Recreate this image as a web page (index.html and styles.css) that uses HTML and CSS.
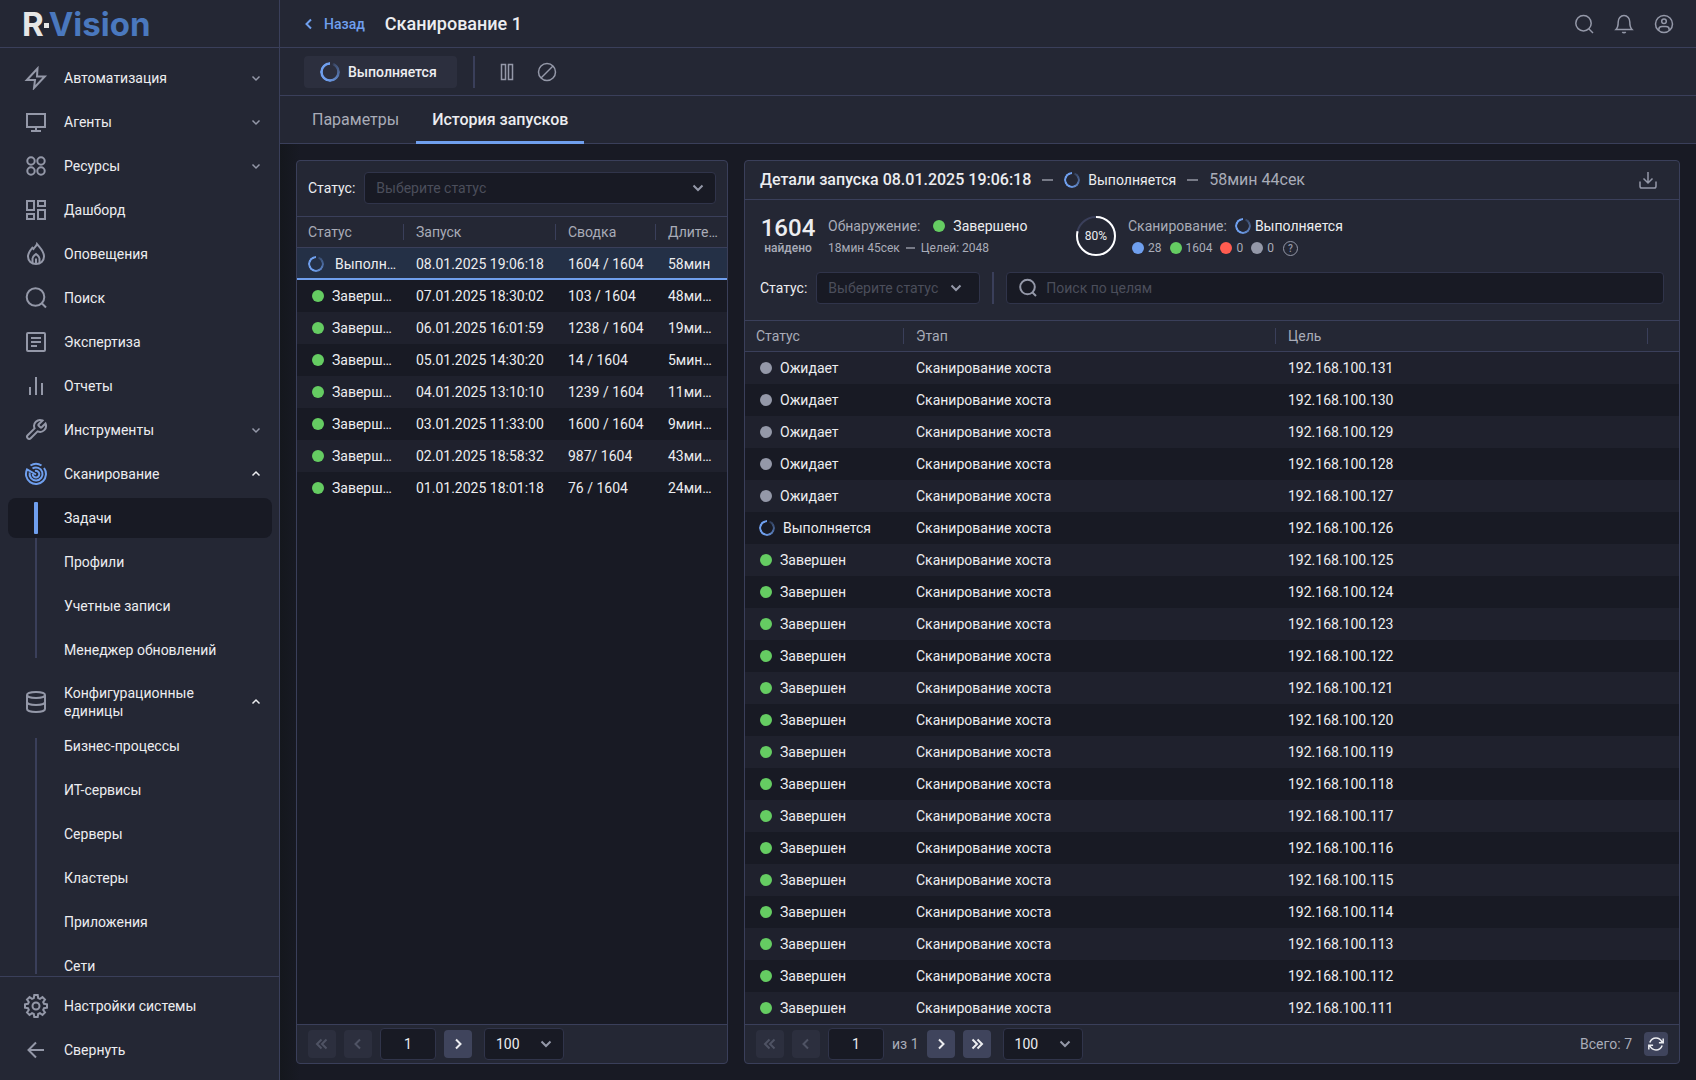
FILE: index.html
```html
<!DOCTYPE html>
<html lang="ru">
<head>
    <meta charset="UTF-8">
    <meta name="viewport" content="width=device-width, initial-scale=1.0">
    <title>R-Vision - Сканирование 1</title>
    <link rel="stylesheet" href="styles.css">
</head>
<body>
    <div class="app">
        <aside class="sidebar">
            <a href="#" class="logo"><span>R</span><i class="logo-dot"></i><span class="logo-blue">Vision</span></a>

            <nav class="nav">
                <a href="#" class="nav-item">
                    <svg class="icon" viewBox="0 0 24 24"><path d="M13.5 2.500 2.800 14H11l-1 8 10.800-11.500H13z"/></svg>
                    <span>Автоматизация</span>
                    <svg class="arrow" viewBox="0 0 16 16"><path d="m4.500 6.500 3.500 3.500 3.500-3.500"/></svg>
                </a>
                <a href="#" class="nav-item">
                    <svg class="icon" viewBox="0 0 24 24"><path d="M3 4h18v13H3zM12 17v4M7 21h10"/></svg>
                    <span>Агенты</span>
                    <svg class="arrow" viewBox="0 0 16 16"><path d="m4.500 6.500 3.500 3.500 3.500-3.500"/></svg>
                </a>
                <a href="#" class="nav-item">
                    <svg class="icon" viewBox="0 0 24 24"><circle cx="7" cy="7" r="3.700"/><circle cx="17" cy="7" r="3.700"/><circle cx="7" cy="17" r="3.700"/><circle cx="17" cy="17" r="3.700"/></svg>
                    <span>Ресурсы</span>
                    <svg class="arrow" viewBox="0 0 16 16"><path d="m4.500 6.500 3.500 3.500 3.500-3.500"/></svg>
                </a>
                <a href="#" class="nav-item">
                    <svg class="icon" viewBox="0 0 24 24"><path d="M3 3h7v9H3zM14 3h7v5h-7zM3 16h7v5H3zM14 12h7v9h-7z"/></svg>
                    <span>Дашборд</span>
                </a>
                <a href="#" class="nav-item">
                    <svg class="icon" viewBox="0 0 24 24"><path d="M13 2c-.5 2-2.500 3.500-3.500 5L8.300 5.800C6 8.500 4 11 4 14.500 4 19 7.500 22 12 22s8-3 8-7.500C20 9 16 6 13 2z"/><path d="M8.500 21v-4.500c0-2 1.500-3 3.500-4.500 2 1.500 3.500 2.500 3.500 4.500V21M12 16.500V21"/></svg>
                    <span>Оповещения</span>
                </a>
                <a href="#" class="nav-item">
                    <svg class="icon" viewBox="0 0 24 24"><circle cx="11.500" cy="11" r="8.800"/><path d="m18 17.500 4 4"/></svg>
                    <span>Поиск</span>
                </a>
                <a href="#" class="nav-item">
                    <svg class="icon" viewBox="0 0 24 24"><rect x="3" y="3" width="18" height="18" rx="1"/><path d="M7 8h10M7 12h10M7 16h6"/></svg>
                    <span>Экспертиза</span>
                </a>
                <a href="#" class="nav-item">
                    <svg class="icon" viewBox="0 0 24 24"><path d="M6 13v8M12 3v18M18 9v12"/></svg>
                    <span>Отчеты</span>
                </a>
                <a href="#" class="nav-item">
                    <svg class="icon" viewBox="0 0 24 24"><path d="M14.700 6.300a1 1 0 0 0 0 1.400l1.600 1.600a1 1 0 0 0 1.400 0l3.800-3.800a6 6 0 0 1-7.900 7.900l-6.900 6.900a2.100 2.100 0 0 1-3-3l6.900-6.900a6 6 0 0 1 7.900-7.900z"/></svg>
                    <span>Инструменты</span>
                    <svg class="arrow" viewBox="0 0 16 16"><path d="m4.500 6.500 3.500 3.500 3.500-3.500"/></svg>
                </a>
                <a href="#" class="nav-item open">
                    <svg class="icon blue" viewBox="0 0 24 24"><path d="M6.500 3.500A10 10 0 0 1 17.500 3.500M20 6A10 10 0 1 1 3 7.500L12 12.500"/><path d="M8.500 6.500a6.500 6.500 0 1 1-2.800 4"/><path d="M11 9a3.300 3.300 0 1 1-2.300 3"/></svg>
                    <span>Сканирование</span>
                    <svg class="arrow" viewBox="0 0 16 16"><path d="m4.500 9.500 3.500-3.500 3.500 3.500"/></svg>
                </a>
                <div class="submenu">
                    <a href="#" class="active">Задачи</a>
                    <a href="#">Профили</a>
                    <a href="#">Учетные записи</a>
                    <a href="#">Менеджер обновлений</a>
                </div>
                <a href="#" class="nav-item open">
                    <svg class="icon" viewBox="0 0 24 24"><ellipse cx="12" cy="5" rx="9" ry="3"/><path d="M3 5v14c0 1.700 4 3 9 3s9-1.300 9-3V5M3 12c0 1.700 4 3 9 3s9-1.300 9-3"/></svg>
                    <span>Конфигурационные единицы</span>
                    <svg class="arrow" viewBox="0 0 16 16"><path d="m4.500 9.500 3.500-3.500 3.500 3.500"/></svg>
                </a>
                <div class="submenu">
                    <a href="#">Бизнес-процессы</a>
                    <a href="#">ИТ-сервисы</a>
                    <a href="#">Серверы</a>
                    <a href="#">Кластеры</a>
                    <a href="#">Приложения</a>
                    <a href="#">Сети</a>
                </div>
            </nav>

            <div class="sidebar-footer">
                <a href="#" class="nav-item">
                    <svg class="icon" viewBox="0 0 24 24"><circle cx="12" cy="12" r="3.500"/><path d="M10.300 1h3.400l.5 3 1.800.8 2.500-1.800 2.500 2.500-1.800 2.500.8 1.800 3 .5v3.400l-3 .5-.8 1.800 1.800 2.500-2.500 2.500-2.500-1.800-1.800.8-.5 3h-3.400l-.5-3-1.800-.8L5.500 21 3 18.500 4.800 16 4 14.200l-3-.5v-3.400l3-.5L4.800 8 3 5.500 5.500 3 8 4.800 9.800 4z"/></svg>
                    <span>Настройки системы</span>
                </a>
                <button type="button" class="nav-item">
                    <svg class="icon" viewBox="0 0 24 24"><path d="M20 12H5M12 4.500 4.500 12l7.500 7.500"/></svg>
                    <span>Свернуть</span>
                </button>
            </div>
        </aside>

        <main class="main">
            <header class="topbar">
                <a href="#" class="back">
                    <svg viewBox="0 0 12 12"><path d="M8 1.500 3.500 6 8 10.500"/></svg>
                    Назад
                </a>
                <h1>Сканирование 1</h1>
                <div class="topbar-actions">
                    <button type="button" class="icon-btn" aria-label="Поиск">
                        <svg viewBox="0 0 24 24"><circle cx="11.500" cy="11.200" r="7.700"/><path d="m17 17 4 4"/></svg>
                    </button>
                    <button type="button" class="icon-btn" aria-label="Уведомления">
                        <svg viewBox="0 0 24 24"><path d="M4 17.500h16c-2-2-2.200-3.500-2.200-7.500 0-3.500-2.300-6.500-5.800-6.500S6.200 6.500 6.200 10c0 4-.2 5.500-2.200 7.500zM10.300 20c.8 1 2.600 1 3.400 0"/></svg>
                    </button>
                    <button type="button" class="icon-btn" aria-label="Профиль">
                        <svg viewBox="0 0 24 24"><circle cx="12" cy="12" r="8.500"/><circle cx="12" cy="9.200" r="2.300"/><path d="M6.800 18.500v-1c0-1.800 1.400-3 3.200-3h4c1.800 0 3.200 1.200 3.200 3v1"/></svg>
                    </button>
                </div>
            </header>

            <div class="toolbar">
                <div class="run-status"><span class="spinner spinner-lg"></span>Выполняется</div>
                <span class="divider"></span>
                <div class="toolbar-actions">
                    <button type="button" class="tool-btn" aria-label="Пауза">
                        <svg viewBox="0 0 24 24"><path d="M6.500 4.500h4v15h-4zM13.500 4.500h4v15h-4z"/></svg>
                    </button>
                    <button type="button" class="tool-btn" aria-label="Остановить">
                        <svg viewBox="0 0 24 24"><circle cx="12" cy="12" r="8.500"/><path d="m6 18 12-12"/></svg>
                    </button>
                </div>
            </div>

            <nav class="tabs">
                <a href="#">Параметры</a>
                <a href="#" class="active">История запусков</a>
            </nav>

            <div class="content">
                <section class="panel">
                    <div class="filter">
                        <label for="run-status">Статус:</label>
                        <select id="run-status" class="select placeholder">
                            <option>Выберите статус</option>
                        </select>
                    </div>
                    <div class="table-wrap">
                        <table class="runs">
                            <thead>
                                <tr><th>Статус</th><th>Запуск</th><th>Сводка</th><th>Длительность</th></tr>
                            </thead>
                            <tbody id="runs"></tbody>
                        </table>
                    </div>
                    <footer class="pager">
                        <button type="button" class="page-btn" aria-label="В начало" disabled><svg viewBox="0 0 16 16"><path d="M7.500 3.500 3 8l4.500 4.500M12.500 3.500 8 8l4.500 4.500"/></svg></button>
                        <button type="button" class="page-btn" aria-label="Назад" disabled><svg viewBox="0 0 16 16"><path d="M10 3.500 5.500 8l4.500 4.500"/></svg></button>
                        <input type="text" class="page-input" value="1" aria-label="Страница">
                        <button type="button" class="page-btn" aria-label="Вперед"><svg viewBox="0 0 16 16"><path d="M6 3.500 10.500 8 6 12.500"/></svg></button>
                        <select class="select page-size" aria-label="Записей на странице">
                            <option>100</option>
                        </select>
                    </footer>
                </section>

                <section class="panel">
                    <header class="details-header">
                        <h2>Детали запуска 08.01.2025 19:06:18</h2>
                        <span class="dash"></span>
                        <span class="details-status"><span class="spinner"></span>Выполняется</span>
                        <span class="dash"></span>
                        <span class="duration">58мин 44сек</span>
                        <button type="button" class="icon-btn download" aria-label="Скачать">
                            <svg viewBox="0 0 24 24"><path d="M12 4v10.500M7.500 10.500 12 15l4.500-4.500M4 13.500v4.700c0 1 .8 1.800 1.800 1.800h12.400c1 0 1.800-.8 1.800-1.800v-4.700"/></svg>
                        </button>
                    </header>

                    <div class="summary">
                        <div class="found">
                            <strong>1604</strong>
                            <span>найдено</span>
                        </div>
                        <div class="stage discovery">
                            <div class="stage-title">Обнаружение: <span class="dot green"></span><b>Завершено</b></div>
                            <div class="stage-info">18мин 45сек <span class="dash small"></span> Целей: 2048</div>
                        </div>
                        <div class="ring">
                            <svg viewBox="0 0 40 40"><circle class="ring-bg" cx="20" cy="20" r="19"/><circle class="ring-value" cx="20" cy="20" r="19" pathLength="100"/></svg>
                            <span>80%</span>
                        </div>
                        <div class="stage scanning">
                            <div class="stage-title">Сканирование: <span class="spinner"></span><b>Выполняется</b></div>
                            <div class="stage-info counters">
                                <span><i class="dot blue"></i>28</span>
                                <span><i class="dot green"></i>1604</span>
                                <span><i class="dot red"></i>0</span>
                                <span><i class="dot gray"></i>0</span>
                                <button type="button" class="help">?</button>
                            </div>
                        </div>
                    </div>

                    <div class="filter details-filter">
                        <label for="target-status">Статус:</label>
                        <select id="target-status" class="select placeholder">
                            <option>Выберите статус</option>
                        </select>
                        <span class="divider"></span>
                        <div class="search">
                            <svg viewBox="0 0 24 24"><circle cx="11.500" cy="11" r="7.300"/><path d="m16.500 16.500 3.500 3.500"/></svg>
                            <input type="text" placeholder="Поиск по целям" aria-label="Поиск по целям">
                        </div>
                    </div>

                    <div class="table-wrap">
                        <table class="targets">
                            <thead>
                                <tr><th>Статус</th><th>Этап</th><th>Цель</th><th></th></tr>
                            </thead>
                            <tbody id="targets"></tbody>
                        </table>
                    </div>
                    <footer class="pager">
                        <button type="button" class="page-btn" aria-label="В начало" disabled><svg viewBox="0 0 16 16"><path d="M7.500 3.500 3 8l4.500 4.500M12.500 3.500 8 8l4.500 4.500"/></svg></button>
                        <button type="button" class="page-btn" aria-label="Назад" disabled><svg viewBox="0 0 16 16"><path d="M10 3.500 5.500 8l4.500 4.500"/></svg></button>
                        <input type="text" class="page-input" value="1" aria-label="Страница">
                        <span class="page-count">из 1</span>
                        <button type="button" class="page-btn" aria-label="Вперед"><svg viewBox="0 0 16 16"><path d="M6 3.500 10.500 8 6 12.500"/></svg></button>
                        <button type="button" class="page-btn" aria-label="В конец"><svg viewBox="0 0 16 16"><path d="M3.500 3.500 8 8l-4.500 4.500M8.500 3.500 13 8l-4.500 4.500"/></svg></button>
                        <select class="select page-size" aria-label="Записей на странице">
                            <option>100</option>
                        </select>
                        <span class="total">Всего: 7</span>
                        <button type="button" class="page-btn refresh" aria-label="Обновить">
                            <svg viewBox="0 0 16 16"><path d="M1.800 6.500C3 3.500 5 2 8 2s5 1.800 6.300 4.500M15.200 2.500v4.300h-4.300M14.200 9.500C13 12.500 11 14 8 14s-5-1.800-6.300-4.500M.8 13.500V9.200h4.300"/></svg>
                        </button>
                    </footer>
                </section>
            </div>
        </main>
    </div>

    <script>
        const runs = [
            ['Выполняется', '08.01.2025 19:06:18', '1604 / 1604', '58мин'],
            ['Завершен', '07.01.2025 18:30:02', '103 / 1604', '48мин 12сек'],
            ['Завершен', '06.01.2025 16:01:59', '1238 / 1604', '19мин 12сек'],
            ['Завершен', '05.01.2025 14:30:20', '14 / 1604', '5мин 12сек'],
            ['Завершен', '04.01.2025 13:10:10', '1239 / 1604', '11мин 12сек'],
            ['Завершен', '03.01.2025 11:33:00', '1600 / 1604', '9мин 12сек'],
            ['Завершен', '02.01.2025 18:58:32', '987/ 1604', '43мин 12сек'],
            ['Завершен', '01.01.2025 18:01:18', '76 / 1604', '24мин 12сек']
        ];

        const marks = {
            'Выполняется': '<span class="spinner"></span>',
            'Завершен': '<span class="dot green"></span>',
            'Ожидает': '<span class="dot gray"></span>'
        };

        function addRow(tbody, status, cells) {
            const row = document.getElementById(tbody).insertRow();
            row.insertCell().innerHTML = `<div class="status">${marks[status]}<span>${status}</span></div>`;
            cells.forEach(text => row.insertCell().textContent = text);
            return row;
        }

        runs.forEach(([status, ...cells], i) => {
            const row = addRow('runs', status, cells);
            if (i === 0) row.className = 'selected';
        });

        // targets are listed from the newest to the oldest
        for (let host = 131; host >= 111; host--) {
            let status = 'Завершен';
            if (host > 126) status = 'Ожидает';
            if (host === 126) status = 'Выполняется';
            addRow('targets', status, ['Сканирование хоста', '192.168.100.' + host, '']);
        }
    </script>
</body>
</html>
```

FILE: styles.css
```css
:root {
    --bg: #181a24;
    --surface: #242734;
    --raised: #2c2f3e;
    --button: #3f445c;
    --border: #3a3f5a;
    --field-border: #30344a;
    --text: #ecedf0;
    --muted: #a9acb8;
    --icon: #9498a8;
    --placeholder: #4b4e5b;
    --blue: #6f9fee;
    --green: #65cc62;
    --red: #ff5c50;
}

* {
    box-sizing: border-box;
}

body {
    margin: 0;
    background: var(--bg);
    color: var(--text);
    font-family: Roboto, "Noto Sans", sans-serif;
    font-size: 14px;
    line-height: 18px;
}

a {
    color: inherit;
    text-decoration: none;
}

button,
input,
select {
    font: inherit;
    color: inherit;
}

button {
    padding: 0;
    border: none;
    background: none;
    cursor: pointer;
}

svg {
    display: block;
    flex: none;
    fill: none;
    stroke: currentColor;
}

.app {
    display: flex;
    height: 100vh;
}

/* Sidebar */

.sidebar {
    display: flex;
    flex-direction: column;
    flex: none;
    width: 280px;
    background: var(--surface);
    border-right: 1px solid var(--border);
}

.logo {
    display: flex;
    align-items: center;
    flex: none;
    height: 48px;
    padding-left: 22px;
    border-bottom: 1px solid var(--border);
    color: #e6e6e6;
    font-family: Inter, Roboto, sans-serif;
    font-size: 33px;
    font-weight: 700;
}

.logo-dot {
    width: 5px;
    height: 5px;
    margin-top: 4px;
    background: #e6e6e6;
}

.logo-blue {
    color: #4a78be;
}

.nav {
    flex: 1;
    min-height: 0;
    padding-top: 8px;
    overflow: hidden;
}

.nav-item {
    display: flex;
    align-items: center;
    gap: 16px;
    width: 100%;
    height: 44px;
    padding: 0 15px 0 24px;
    text-align: left;
}

.nav-item span {
    flex: 1;
}

.icon {
    width: 24px;
    height: 24px;
    color: var(--icon);
    stroke-width: 2;
}

.icon.blue {
    color: var(--blue);
}

.arrow {
    width: 16px;
    height: 16px;
    color: var(--icon);
    stroke-width: 1.5;
}

.open .arrow {
    color: var(--text);
}

.submenu {
    position: relative;
    display: flex;
    flex-direction: column;
    gap: 4px;
    margin-bottom: 8px;
    padding: 2px 7px 2px 8px;
}

.submenu::before {
    content: "";
    position: absolute;
    top: 14px;
    bottom: 14px;
    left: 35px;
    width: 2px;
    background: var(--border);
}

.submenu a {
    display: flex;
    align-items: center;
    height: 40px;
    padding-left: 56px;
    border-radius: 8px;
}

.submenu a.active {
    position: relative;
    background: var(--bg);
}

.submenu a.active::before {
    content: "";
    position: absolute;
    top: 4px;
    left: 26px;
    width: 4px;
    height: 32px;
    border-radius: 1px;
    background: var(--blue);
}

.sidebar-footer {
    padding: 7px 0 8px;
    border-top: 1px solid var(--border);
}

/* Header */

.main {
    display: flex;
    flex-direction: column;
    flex: 1;
    min-width: 0;
}

.topbar,
.toolbar,
.tabs {
    display: flex;
    flex: none;
    align-items: center;
    height: 48px;
    background: var(--surface);
    border-bottom: 1px solid var(--border);
}

.topbar {
    padding: 0 20px 0 23px;
}

.back {
    display: flex;
    align-items: center;
    gap: 9px;
    color: var(--blue);
    font-weight: 500;
}

.back svg {
    width: 12px;
    height: 12px;
    stroke-width: 2;
}

h1 {
    margin: 0 0 0 20px;
    font-size: 18px;
    font-weight: 500;
}

.topbar-actions {
    display: flex;
    gap: 16px;
    margin-left: auto;
}

.icon-btn svg,
.tool-btn svg {
    width: 24px;
    height: 24px;
    color: var(--icon);
    stroke-width: 1.5;
}

.toolbar {
    gap: 16px;
    padding: 0 24px;
}

.run-status {
    display: flex;
    align-items: center;
    gap: 8px;
    height: 32px;
    padding: 0 20px 0 16px;
    border-radius: 4px;
    background: var(--raised);
    font-weight: 500;
}

.divider {
    width: 2px;
    height: 32px;
    background: var(--border);
}

.toolbar-actions {
    display: flex;
    gap: 8px;
}

.tool-btn {
    display: flex;
    align-items: center;
    justify-content: center;
    width: 32px;
    height: 32px;
}

.tabs {
    gap: 1px;
    padding-left: 16px;
    font-size: 16px;
}

.tabs a {
    display: flex;
    align-items: center;
    height: 48px;
    margin-bottom: -1px;
    padding: 0 16px;
    color: var(--muted);
}

.tabs a.active {
    color: var(--text);
    font-weight: 500;
    box-shadow: inset 0 -3px var(--blue);
}

/* Panels */

.content {
    display: grid;
    grid-template-columns: 6fr 13fr;
    gap: 16px;
    flex: 1;
    min-height: 0;
    padding: 16px;
    background: linear-gradient(90deg, #14171d, var(--bg) 20px);
}

.panel {
    display: flex;
    flex-direction: column;
    min-width: 0;
    min-height: 0;
    border: 1px solid var(--border);
    border-radius: 4px;
    background: var(--surface);
    overflow: hidden;
}

.filter {
    display: flex;
    align-items: center;
    gap: 9px;
    padding: 11px 11px 12px;
}

.select {
    height: 32px;
    padding: 0 32px 0 11px;
    border: 1px solid var(--field-border);
    border-radius: 4px;
    background: var(--bg) url("data:image/svg+xml,%3Csvg xmlns='http://www.w3.org/2000/svg' width='12' height='8' fill='none' stroke='%239498a8' stroke-width='2'%3E%3Cpath d='m1.500 1.500 4.500 4.500 4.500-4.500'/%3E%3C/svg%3E") no-repeat right 11px center;
    appearance: none;
}

.select.placeholder {
    color: var(--placeholder);
}

.filter .select {
    flex: 1;
}

.details-filter {
    gap: 12px;
    padding: 12px 15px 16px;
}

.details-filter label {
    margin-right: -3px;
}

.details-filter .select {
    flex: 0 0 164px;
    background-position: right 17px center;
}

.search {
    position: relative;
    flex: 1;
}

.search svg {
    position: absolute;
    top: 4px;
    left: 10px;
    width: 24px;
    height: 24px;
    color: var(--icon);
    stroke-width: 2;
}

.search input {
    display: block;
    width: 100%;
    height: 32px;
    padding: 0 12px 0 39px;
    border: 1px solid var(--field-border);
    border-radius: 4px;
    background: var(--bg);
}

.search input::placeholder {
    color: var(--placeholder);
}

/* Status marks */

.spinner {
    flex: none;
    display: inline-block;
    width: 16px;
    height: 16px;
    border-radius: 50%;
    background: conic-gradient(transparent 15deg, #6f9fee44 30deg, var(--blue) 200deg);
    -webkit-mask: radial-gradient(closest-side, transparent 68%, #000 76%);
    mask: radial-gradient(closest-side, transparent 68%, #000 76%);
}

.spinner-lg {
    width: 20px;
    height: 20px;
}

.dot {
    flex: none;
    display: inline-block;
    width: 12px;
    height: 12px;
    border-radius: 50%;
}

.green {
    background: var(--green);
}

.gray {
    background: var(--icon);
}

.red {
    background: var(--red);
}

.dot.blue {
    background: var(--blue);
}

.dash {
    width: 11px;
    height: 2px;
    background: #777a87;
}

.dash.small {
    width: 9px;
}

/* Run details */

.details-header {
    display: flex;
    align-items: center;
    gap: 11px;
    height: 39px;
    padding: 0 19px 0 15px;
    border-bottom: 1px solid var(--border);
}

h2 {
    margin: 0;
    font-size: 16px;
    font-weight: 500;
}

.details-status {
    display: flex;
    align-items: center;
    gap: 8px;
}

.duration {
    color: var(--muted);
    font-size: 16px;
}

.download {
    margin-left: auto;
}

.summary {
    display: flex;
    align-items: center;
    height: 60px;
    padding: 12px 15px 0;
    color: var(--muted);
}

.found {
    display: flex;
    flex-direction: column;
    align-items: center;
    width: 56px;
    margin-right: 12px;
    font-size: 12px;
    font-weight: 500;
    line-height: 16px;
}

.found strong {
    color: var(--text);
    font-size: 24px;
    font-weight: 500;
    line-height: 24px;
}

.stage {
    padding-top: 2px;
}

.stage-title,
.stage-info {
    display: flex;
    align-items: center;
    gap: 8px;
    height: 22px;
}

.stage-title b {
    color: var(--text);
    font-weight: 400;
}

.stage-info {
    gap: 6px;
    font-size: 12px;
}

.discovery {
    width: 248px;
}

.discovery .dot {
    margin-left: 5px;
}

.scanning .stage-title b {
    margin-left: -4px;
}

.ring {
    position: relative;
    width: 40px;
    height: 40px;
    margin-right: 12px;
    color: var(--text);
    font-size: 12px;
}

.ring svg {
    transform: rotate(-90deg);
    stroke-width: 2;
}

.ring-bg {
    stroke: var(--border);
}

.ring-value {
    stroke: #fff;
    stroke-dasharray: 79 21;
}

.ring span {
    position: absolute;
    inset: 0;
    display: flex;
    align-items: center;
    justify-content: center;
}

.counters {
    gap: 8px;
    padding-left: 4px;
}

.counters span {
    display: flex;
    align-items: center;
    gap: 4px;
}

.help {
    width: 15px;
    height: 15px;
    margin-left: 1px;
    border: 1px solid var(--icon);
    border-radius: 50%;
    color: var(--icon);
    font-size: 10px;
    font-weight: 500;
    line-height: 13px;
}

/* Tables */

.table-wrap {
    flex: 1;
    min-height: 0;
    background: var(--bg);
    overflow: hidden;
}

table {
    width: 100%;
    border-collapse: separate;
    border-spacing: 0;
    table-layout: fixed;
}

th,
td {
    height: 32px;
    padding: 0 12px;
    overflow: hidden;
    text-align: left;
    text-overflow: ellipsis;
    white-space: nowrap;
}

th {
    background: linear-gradient(var(--border), var(--border)) no-repeat right center / 1px 16px var(--surface);
    border-top: 1px solid var(--border);
    border-bottom: 1px solid var(--border);
    color: var(--muted);
    font-weight: 400;
}

th:last-child {
    background: var(--surface);
}

th:first-child,
td:first-child {
    padding-left: 11px;
}

tbody tr:nth-child(odd) {
    background: #1f212d;
}

tbody tr.selected {
    background: #243046;
}

.selected td {
    padding-top: 2px;
    border-bottom: 2px solid var(--blue);
}

.runs th:nth-child(1) {
    width: 107px;
}

.runs th:nth-child(2) {
    width: 152px;
}

.runs th:nth-child(3) {
    width: 100px;
}

.runs th:nth-child(4) {
    padding-right: 8px;
}

.runs td:nth-child(4) {
    padding-right: 14px;
}

.runs td:first-child {
    padding-right: 6px;
}

.targets th:nth-child(1) {
    width: 159px;
}

.targets th:nth-child(4) {
    width: 31px;
}

.status {
    display: flex;
    align-items: center;
}

.status span:last-child {
    overflow: hidden;
    text-overflow: ellipsis;
}

.status .dot {
    margin: 0 8px 0 4px;
}

.runs .spinner {
    margin-right: 11px;
}

.targets .spinner {
    margin: 0 8px 0 3px;
}

/* Pager */

.pager {
    display: flex;
    align-items: center;
    gap: 8px;
    height: 39px;
    padding: 0 11px;
    border-top: 1px solid var(--border);
}

.page-btn {
    display: flex;
    align-items: center;
    justify-content: center;
    width: 28px;
    height: 28px;
    border-radius: 4px;
    background: var(--button);
}

.page-btn:disabled {
    background: var(--raised);
    color: #4f5364;
}

.page-btn svg {
    width: 16px;
    height: 16px;
    stroke-width: 2;
}

.page-input {
    width: 56px;
    height: 32px;
    padding: 0;
    border: 1px solid var(--field-border);
    border-radius: 4px;
    background: var(--bg);
    text-align: center;
}

.page-size {
    width: 80px;
    margin-left: 4px;
}

.page-count,
.total {
    color: var(--muted);
}

.total {
    margin-left: auto;
}

.page-btn.refresh {
    width: 24px;
    height: 24px;
    margin-left: 4px;
}

.refresh svg {
    stroke-width: 1.5;
}
```
